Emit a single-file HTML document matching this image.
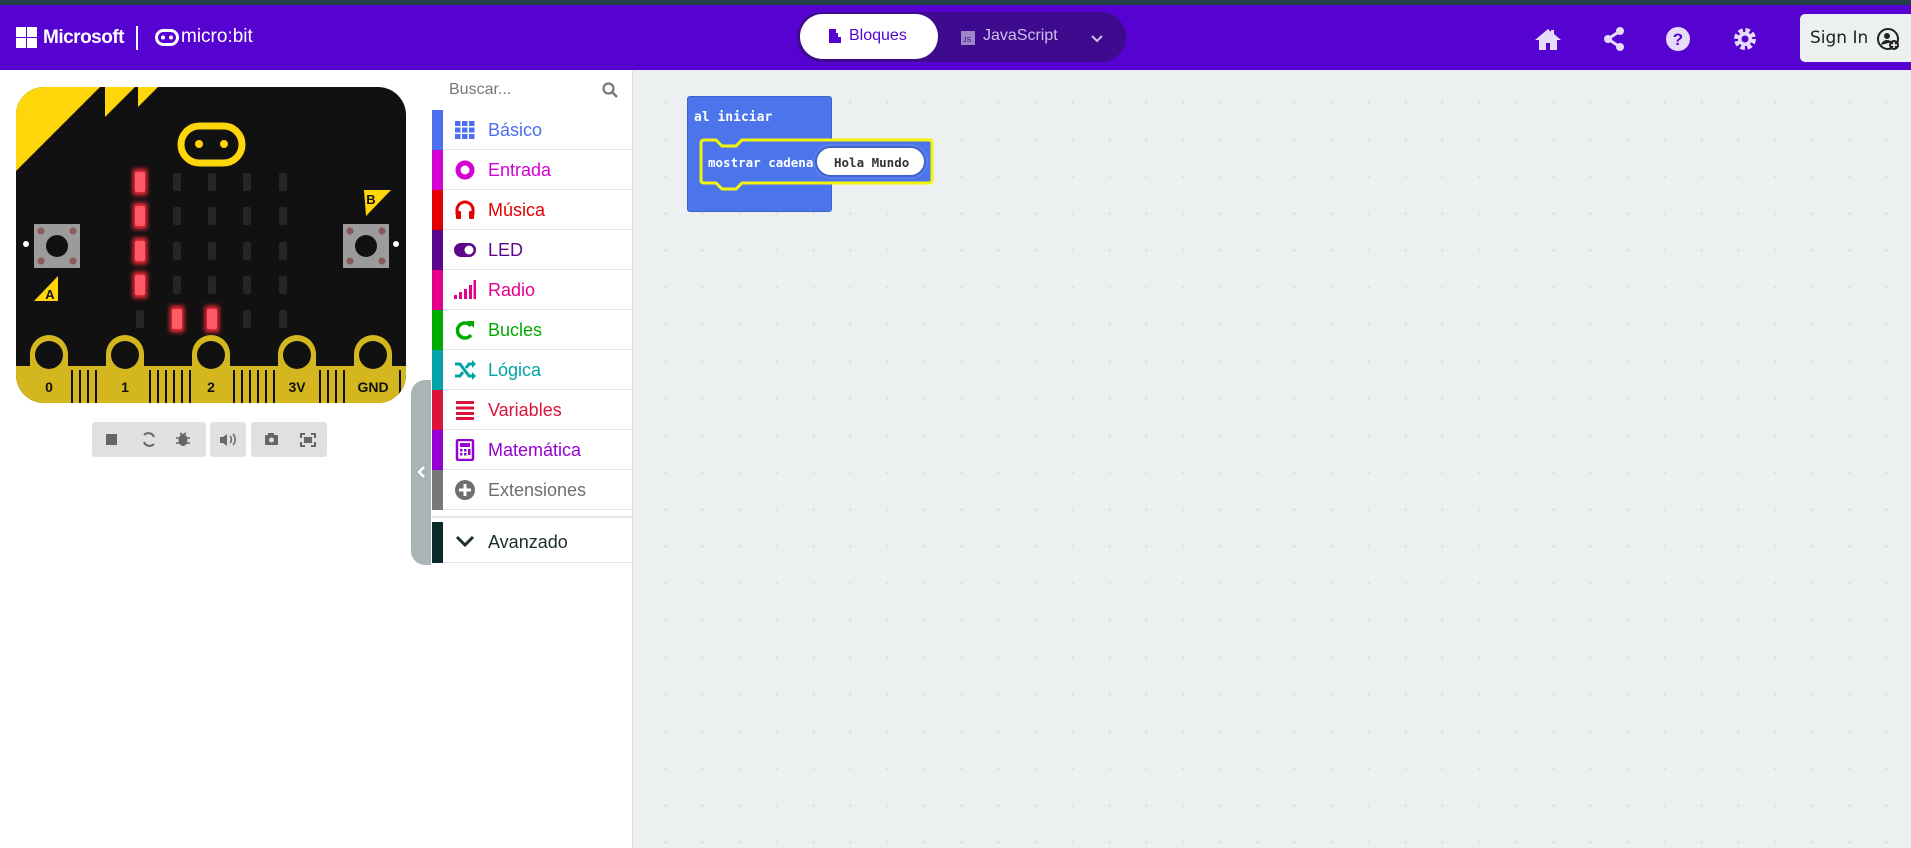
<!DOCTYPE html>
<html><head><meta charset="utf-8"><style>
*{margin:0;padding:0;box-sizing:border-box}
body{width:1911px;height:848px;overflow:hidden;background:#fff;font-family:"Liberation Sans",sans-serif;position:relative}
.abs{position:absolute}
#top{left:0;top:0;width:1911px;height:5px;background:#24404a}
#hdr{left:0;top:5px;width:1911px;height:65px;background:#5603d1}
#ws{left:633px;top:70px;width:1278px;height:778px;background:#ecf0f1;background-image:radial-gradient(circle,#d8dcdd 1px,transparent 1.3px);background-size:37px 37px;background-position:14px 14px}
#tb{left:431px;top:70px;width:202px;height:778px;background:#fff;border-right:1px solid #ddd}
.it{position:absolute;left:432px;width:200px;height:40px;border-bottom:1px solid #e6e6e6;font-size:18px}
.it .s{position:absolute;left:0;top:0;width:11px;height:40px}
.it .ic{position:absolute;left:22px;top:9px;width:22px;height:22px}
.it .t{position:absolute;left:56px;top:10px}
.mono{font-family:"DejaVu Sans Mono","Liberation Mono",monospace;font-weight:bold}
</style></head><body>
<div id="top" class="abs"></div>
<div id="hdr" class="abs">
 <svg class="abs" style="left:16px;top:22px" width="22" height="22"><rect x="0" y="0" width="10" height="10" fill="#fff"/><rect x="11" y="0" width="10" height="10" fill="#fff"/><rect x="0" y="11" width="10" height="10" fill="#fff"/><rect x="11" y="11" width="10" height="10" fill="#fff"/></svg>
 <div class="abs" style="left:43px;top:22px;color:#fff;font-size:19px;font-weight:bold;letter-spacing:-0.5px">Microsoft</div>
 <div class="abs" style="left:136px;top:21px;width:2px;height:24px;background:#fff"></div>
 <svg class="abs" style="left:155px;top:24px" width="24" height="17"><rect x="1.5" y="1.5" width="21" height="14" rx="7" fill="none" stroke="#fff" stroke-width="3"/><circle cx="8" cy="8.5" r="2" fill="#fff"/><circle cx="16" cy="8.5" r="2" fill="#fff"/></svg>
 <div class="abs" style="left:181px;top:21px;color:#fff;font-size:19px">micro:bit</div>
 <div class="abs" style="left:797px;top:7px;width:329px;height:50px;border-radius:25px;background:#3e0b8e"></div>
 <div class="abs" style="left:800px;top:9px;width:138px;height:45px;border-radius:23px;background:#fff"></div>
 <svg class="abs" style="left:829px;top:24px" width="12" height="14"><path d="M3 0h4v4h2v4h3v6H0V0z" fill="#5603d1"/></svg>
 <div class="abs" style="left:849px;top:22px;color:#5603d1;font-size:16px">Bloques</div>
 <div class="abs" style="left:961px;top:26px;width:14px;height:14px;background:#9c86c8;font-size:7px;color:#3e0b8e;padding:6px 0 0 2px">JS</div>
 <div class="abs" style="left:983px;top:22px;color:#cfc1ee;font-size:16px">JavaScript</div>
 <svg class="abs" style="left:1090px;top:29px" width="14" height="9"><path d="M2 2l5 5 5-5" stroke="#cfc1ee" stroke-width="2" fill="none"/></svg>
 <svg class="abs" style="left:1534px;top:22px" width="28" height="24"><path d="M14 2L1 13h4v10h7v-7h4v7h7V13h4L20 7V3h-3v2z" fill="#e6dcfa"/></svg>
 <svg class="abs" style="left:1603px;top:22px" width="22" height="24"><circle cx="17" cy="4" r="4" fill="#e6dcfa"/><circle cx="5" cy="12" r="4" fill="#e6dcfa"/><circle cx="17" cy="20" r="4" fill="#e6dcfa"/><path d="M17 4L5 12l12 8" stroke="#e6dcfa" stroke-width="3" fill="none"/></svg>
 <svg class="abs" style="left:1666px;top:22px" width="24" height="24"><circle cx="12" cy="12" r="12" fill="#e6dcfa"/><text x="12" y="18" text-anchor="middle" font-family="Liberation Sans" font-weight="bold" font-size="17" fill="#5603d1">?</text></svg>
 <svg class="abs" style="left:1733px;top:22px" width="24" height="24"><circle cx="12" cy="12" r="8" fill="none" stroke="#e6dcfa" stroke-width="6" stroke-dasharray="4 2.3"/><circle cx="12" cy="12" r="7" fill="#e6dcfa"/><circle cx="12" cy="12" r="3.5" fill="#5603d1"/></svg>
 <div class="abs" style="left:1800px;top:9px;width:115px;height:48px;background:#ecf0f1;border-radius:5px"></div>
 <div class="abs" style="left:1810px;top:23px;font-size:17px;color:#222;font-family:'DejaVu Sans',sans-serif">Sign In</div>
 <svg class="abs" style="left:1876px;top:22px" width="24" height="24"><circle cx="12" cy="12" r="10" fill="none" stroke="#222" stroke-width="2"/><circle cx="11" cy="9" r="3" fill="#222"/><path d="M5 18c1-4 4-5 6-5s4 1 5 2" fill="#222"/><circle cx="18" cy="18" r="5" fill="#222"/><path d="M18 15v6M15 18h6" stroke="#fff" stroke-width="1.5"/></svg>
</div>

<!-- board -->
<svg class="abs" style="left:0;top:70px" width="431" height="400">
 <defs><clipPath id="bc"><rect x="16" y="17" width="390" height="316" rx="28"/></clipPath>
 <filter id="gl"><feGaussianBlur stdDeviation="2.5"/></filter></defs>
 <g clip-path="url(#bc)">
  <rect x="16" y="17" width="390" height="316" fill="#111"/>
  <path d="M16 17H100L16 101Z" fill="#ffd60a"/>
  <path d="M105 17h30l-30 30z" fill="#ffd60a"/>
  <path d="M138 17h20l-20 20z" fill="#ffd60a"/>
  <rect x="16" y="296" width="390" height="40" fill="#d4b61e"/>
  <g stroke="#111" stroke-width="2">
   <path d="M72 300v36M80 300v36M88 300v36M96 300v36M150 300v36M158 300v36M166 300v36M174 300v36M182 300v36M190 300v36M234 300v36M242 300v36M250 300v36M258 300v36M266 300v36M274 300v36M320 300v36M328 300v36M336 300v36M344 300v36M400 300v36"/>
  </g>
  <g fill="#d4b61e">
   <rect x="30" y="265" width="38" height="75" rx="19"/><rect x="106" y="265" width="38" height="75" rx="19"/><rect x="192" y="265" width="38" height="75" rx="19"/><rect x="278" y="265" width="38" height="75" rx="19"/><rect x="354" y="265" width="38" height="75" rx="19"/>
  </g>
  <g fill="#111"><circle cx="49" cy="285" r="14"/><circle cx="125" cy="285" r="14"/><circle cx="211" cy="285" r="14"/><circle cx="297" cy="285" r="14"/><circle cx="373" cy="285" r="14"/></g>
  <g font-family="Liberation Sans" font-weight="bold" font-size="14" fill="#111" text-anchor="middle"><text x="49" y="322">0</text><text x="125" y="322">1</text><text x="211" y="322">2</text><text x="297" y="322">3V</text><text x="373" y="322">GND</text></g>
 </g>
 <rect x="181" y="56" width="61" height="37" rx="18.5" fill="none" stroke="#ffd60a" stroke-width="7"/>
 <circle cx="199" cy="74" r="4" fill="#ffd60a"/><circle cx="224" cy="74" r="4" fill="#ffd60a"/>
 <g fill="#262626">
  <rect x="173" y="103" width="8" height="18" rx="2"/><rect x="208" y="103" width="8" height="18" rx="2"/><rect x="243" y="103" width="8" height="18" rx="2"/><rect x="279" y="103" width="8" height="18" rx="2"/>
  <rect x="173" y="137" width="8" height="18" rx="2"/><rect x="208" y="137" width="8" height="18" rx="2"/><rect x="243" y="137" width="8" height="18" rx="2"/><rect x="279" y="137" width="8" height="18" rx="2"/>
  <rect x="173" y="172" width="8" height="18" rx="2"/><rect x="208" y="172" width="8" height="18" rx="2"/><rect x="243" y="172" width="8" height="18" rx="2"/><rect x="279" y="172" width="8" height="18" rx="2"/>
  <rect x="173" y="206" width="8" height="18" rx="2"/><rect x="208" y="206" width="8" height="18" rx="2"/><rect x="243" y="206" width="8" height="18" rx="2"/><rect x="279" y="206" width="8" height="18" rx="2"/>
  <rect x="136" y="240" width="8" height="18" rx="2"/><rect x="243" y="240" width="8" height="18" rx="2"/><rect x="279" y="240" width="8" height="18" rx="2"/>
 </g>
 <g fill="#ff2a3a" filter="url(#gl)"><rect x="133" y="99" width="14" height="26"/><rect x="133" y="133" width="14" height="26"/><rect x="133" y="168" width="14" height="26"/><rect x="133" y="202" width="14" height="26"/><rect x="170" y="236" width="14" height="26"/><rect x="205" y="236" width="14" height="26"/></g>
 <g fill="#ff5a66"><rect x="135" y="102" width="10" height="20" rx="2"/><rect x="135" y="136" width="10" height="20" rx="2"/><rect x="135" y="171" width="10" height="20" rx="2"/><rect x="135" y="205" width="10" height="20" rx="2"/><rect x="172" y="239" width="10" height="20" rx="2"/><rect x="207" y="239" width="10" height="20" rx="2"/></g>
 <rect x="34" y="154" width="46" height="44" fill="#9b9b9b"/><circle cx="57" cy="176" r="11" fill="#111"/>
 <g fill="#8a5a5a"><circle cx="41" cy="161" r="3.5"/><circle cx="73" cy="161" r="3.5"/><circle cx="41" cy="191" r="3.5"/><circle cx="73" cy="191" r="3.5"/></g>
 <rect x="343" y="154" width="46" height="44" fill="#9b9b9b"/><circle cx="366" cy="176" r="11" fill="#111"/>
 <g fill="#8a5a5a"><circle cx="350" cy="161" r="3.5"/><circle cx="382" cy="161" r="3.5"/><circle cx="350" cy="191" r="3.5"/><circle cx="382" cy="191" r="3.5"/></g>
 <circle cx="26" cy="174" r="3" fill="#fff"/><circle cx="396" cy="174" r="3" fill="#fff"/>
 <path d="M34 231L58 206V231Z" fill="#ffd60a"/><text x="50" y="229" font-family="Liberation Sans" font-weight="bold" font-size="13" fill="#111" text-anchor="middle">A</text>
 <path d="M364 120h27L366 146Z" fill="#ffd60a"/><text x="371" y="134" font-family="Liberation Sans" font-weight="bold" font-size="13" fill="#111" text-anchor="middle">B</text>
</svg>
<!-- sim toolbar -->
<div class="abs" style="left:92px;top:422px;width:114px;height:35px;background:#e0e0e0;border-radius:3px"></div>
<div class="abs" style="left:210px;top:422px;width:36px;height:35px;background:#e0e0e0;border-radius:3px"></div>
<div class="abs" style="left:251px;top:422px;width:76px;height:35px;background:#e0e0e0;border-radius:3px"></div>
<svg class="abs" style="left:92px;top:422px" width="240" height="35" fill="#666" stroke="#666">
 <rect x="14" y="12" width="11" height="11" stroke="none"/>
 <path d="M52 13a6 6 0 0 1 10 2M62 22a6 6 0 0 1-10-2" fill="none" stroke-width="2"/>
 <path d="M88 11l3 2 3-2M84 16h14M84 21h14" fill="none" stroke-width="1.5"/><ellipse cx="91" cy="18" rx="4.5" ry="6" stroke="none"/>
 <path d="M128 15h3l4-3v12l-4-3h-3z" stroke="none"/><path d="M138 14a5 5 0 0 1 0 7M141 12a8 8 0 0 1 0 11" fill="none" stroke-width="1.5"/>
 <rect x="173" y="13" width="13" height="10" rx="1" stroke="none"/><rect x="176" y="11" width="6" height="3" stroke="none"/><circle cx="179.5" cy="18" r="2.5" fill="#e0e0e0" stroke="none"/>
 <path d="M209 16v-4h4M219 12h4v4M223 20v4h-4M213 24h-4v-4" fill="none" stroke-width="2"/><rect x="212" y="15" width="8" height="6" stroke="none"/>
</svg>
<!-- collapse tab -->
<div class="abs" style="left:411px;top:380px;width:22px;height:185px;background:#aab4b6;border-radius:14px 0 0 14px"></div>
<svg class="abs" style="left:416px;top:465px" width="10" height="14"><path d="M8 2L3 7l5 5" stroke="#fff" stroke-width="2.5" fill="none"/></svg>

<!-- toolbox -->
<div id="tb" class="abs"></div>
<div class="abs" style="left:449px;top:81px;font-size:16px;color:#777">Buscar...</div>
<svg class="abs" style="left:602px;top:82px" width="16" height="16"><circle cx="6.5" cy="6.5" r="5" stroke="#777" stroke-width="2.2" fill="none"/><path d="M10 10l5 5" stroke="#777" stroke-width="2.5"/></svg>

<div class="it" style="top:110px;color:#4c6ff0"><div class="s" style="background:#4c6ff0"></div><svg class="ic" viewBox="0 0 22 22" fill="#4c6ff0"><rect x="1" y="2" width="5.5" height="5"/><rect x="8" y="2" width="5.5" height="5"/><rect x="15" y="2" width="5.5" height="5"/><rect x="1" y="8.5" width="5.5" height="5"/><rect x="8" y="8.5" width="5.5" height="5"/><rect x="15" y="8.5" width="5.5" height="5"/><rect x="1" y="15" width="5.5" height="5"/><rect x="8" y="15" width="5.5" height="5"/><rect x="15" y="15" width="5.5" height="5"/></svg><div class="t">Básico</div></div>
<div class="it" style="top:150px;color:#d400d4"><div class="s" style="background:#d400d4"></div><svg class="ic" viewBox="0 0 22 22"><circle cx="11" cy="11" r="7" fill="none" stroke="#d400d4" stroke-width="5"/></svg><div class="t">Entrada</div></div>
<div class="it" style="top:190px;color:#e30000"><div class="s" style="background:#e30000"></div><svg class="ic" viewBox="0 0 22 22"><path d="M3 16v-5a8 8 0 0 1 16 0v5" fill="none" stroke="#e30000" stroke-width="3"/><rect x="2" y="12" width="5" height="8" rx="1" fill="#e30000"/><rect x="15" y="12" width="5" height="8" rx="1" fill="#e30000"/></svg><div class="t">Música</div></div>
<div class="it" style="top:230px;color:#5c068c"><div class="s" style="background:#5c068c"></div><svg class="ic" viewBox="0 0 22 22"><rect x="0" y="4" width="22" height="14" rx="7" fill="#5c068c"/><circle cx="15" cy="11" r="4.5" fill="#fff"/></svg><div class="t">LED</div></div>
<div class="it" style="top:270px;color:#e3008c"><div class="s" style="background:#e3008c"></div><svg class="ic" viewBox="0 0 22 22" fill="#e3008c"><rect x="0" y="16" width="3" height="4"/><rect x="5" y="13" width="3" height="7"/><rect x="10" y="10" width="3" height="10"/><rect x="15" y="6" width="3" height="14"/><rect x="19.5" y="1" width="2.5" height="19"/></svg><div class="t">Radio</div></div>
<div class="it" style="top:310px;color:#00aa00"><div class="s" style="background:#00aa00"></div><svg class="ic" viewBox="0 0 22 22"><path d="M17 7a7.5 7.5 0 1 0 0 9" fill="none" stroke="#00aa00" stroke-width="3.5"/><path d="M13 2h7v7z" fill="#00aa00"/></svg><div class="t">Bucles</div></div>
<div class="it" style="top:350px;color:#00a4a6"><div class="s" style="background:#00a4a6"></div><svg class="ic" viewBox="0 0 22 22"><path d="M1 5h5l9 12h4M1 17h5l3-4M12 9l3-4h4" fill="none" stroke="#00a4a6" stroke-width="3"/><path d="M18 1l4 4-4 4zM18 13l4 4-4 4z" fill="#00a4a6"/></svg><div class="t">Lógica</div></div>
<div class="it" style="top:390px;color:#dc143c"><div class="s" style="background:#dc143c"></div><svg class="ic" viewBox="0 0 22 22" fill="#dc143c"><rect x="2" y="2" width="18" height="3"/><rect x="2" y="7.5" width="18" height="3"/><rect x="2" y="13" width="18" height="3"/><rect x="2" y="18" width="18" height="3"/></svg><div class="t">Variables</div></div>
<div class="it" style="top:430px;color:#9400d3"><div class="s" style="background:#9400d3"></div><svg class="ic" viewBox="0 0 22 22"><rect x="3" y="1" width="16" height="20" rx="1.5" fill="none" stroke="#9400d3" stroke-width="2.5"/><rect x="6" y="4" width="10" height="4" fill="#9400d3"/><g fill="#9400d3"><rect x="6" y="10" width="2.5" height="2.5"/><rect x="10" y="10" width="2.5" height="2.5"/><rect x="14" y="10" width="2.5" height="6"/><rect x="6" y="14" width="2.5" height="2.5"/><rect x="10" y="14" width="2.5" height="2.5"/></g></svg><div class="t">Matemática</div></div>
<div class="it" style="top:470px;color:#6f6f6f"><div class="s" style="background:#777"></div><svg class="ic" viewBox="0 0 22 22"><circle cx="11" cy="11" r="10" fill="#6f6f6f"/><path d="M11 5v12M5 11h12" stroke="#fff" stroke-width="3"/></svg><div class="t">Extensiones</div></div>
<div class="abs" style="left:432px;top:516px;width:200px;height:2px;background:#e6e6e6"></div>
<div class="it" style="top:522px;color:#1f2d2d;height:41px"><div class="s" style="background:#0d2a2a;height:41px"></div><svg class="ic" viewBox="0 0 22 22"><path d="M3 6l8 8 8-8" fill="none" stroke="#1f2d2d" stroke-width="3"/></svg><div class="t">Avanzado</div></div>

<!-- workspace -->
<div id="ws" class="abs"></div>
<div class="abs" style="left:687px;top:96px;width:145px;height:116px;background:#4c75ec;border-radius:3px;border:1px solid #3d63cc"></div>
<div class="abs mono" style="left:694px;top:110px;color:#fff;font-size:13px">al iniciar</div>
<svg class="abs" style="left:698px;top:137px" width="236" height="56"><path d="M3 6q0-3 3-3h12l6 6h14l6-6h187q3 0 3 3v37q0 3-3 3H44l-6 6H24l-6-6H6q-3 0-3-3z" fill="#4c75ec" stroke="#f4f40a" stroke-width="3"/></svg>
<div class="abs mono" style="left:708px;top:155px;color:#fff;font-size:12.5px">mostrar cadena</div>
<div class="abs" style="left:815px;top:146px;width:111px;height:31px;border-radius:16px;background:#fff;border:2px solid #3d63cc;box-shadow:0 0 0 2px #5b80ee"></div>
<div class="abs mono" style="left:834px;top:155px;color:#333;font-size:12.5px">Hola Mundo</div>
</body></html>
